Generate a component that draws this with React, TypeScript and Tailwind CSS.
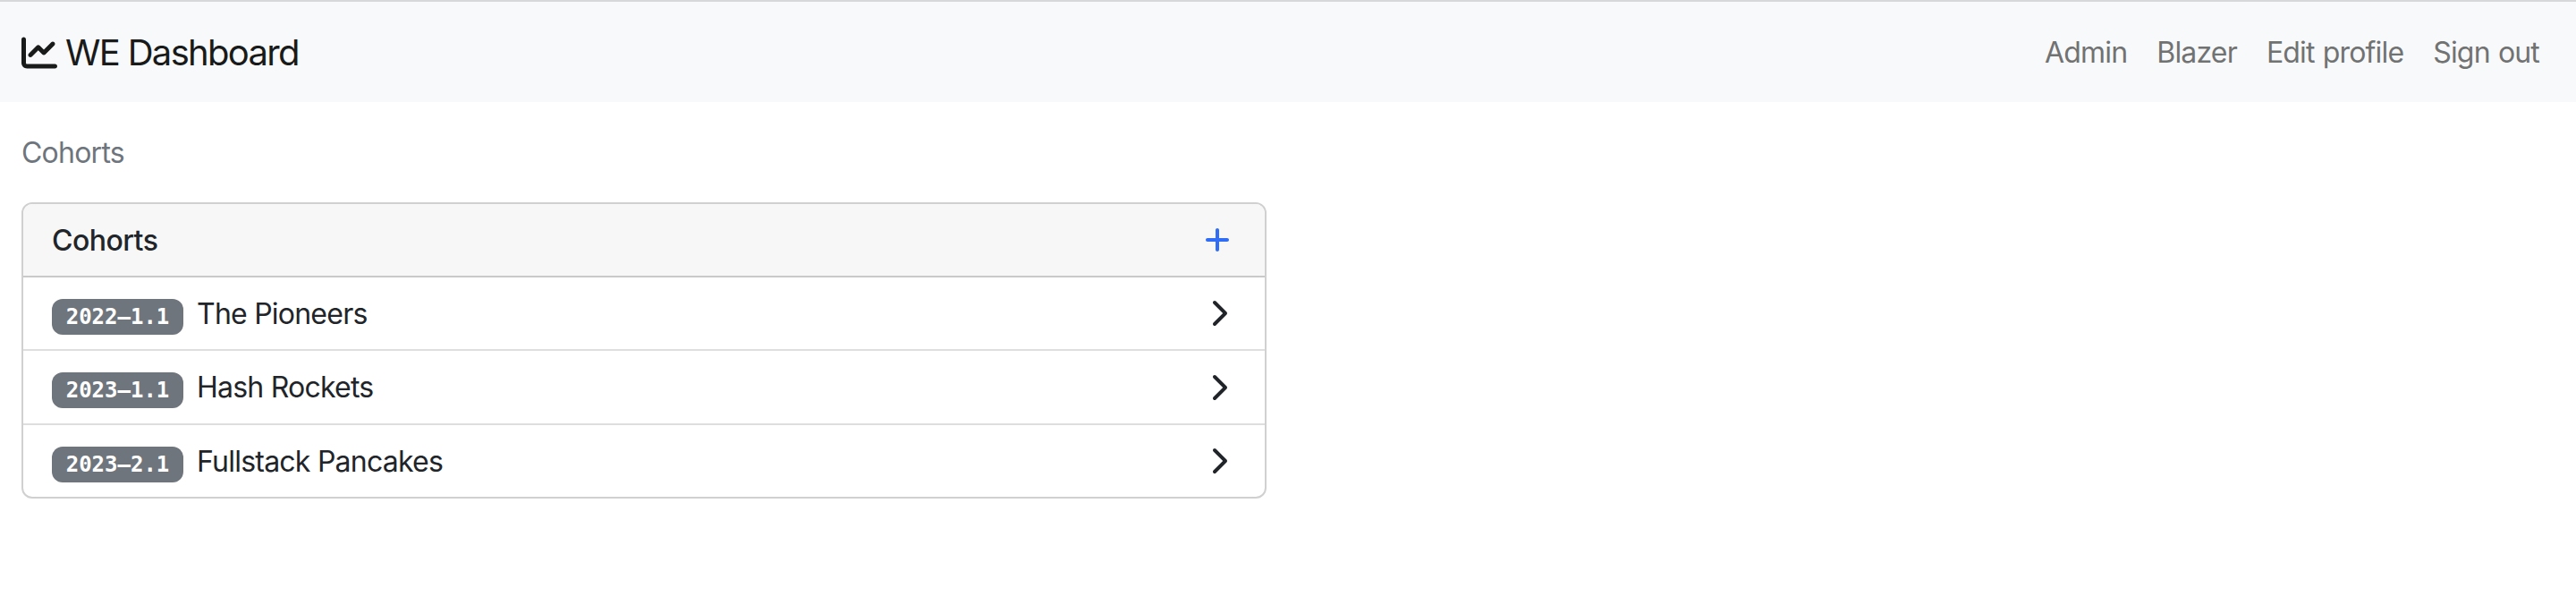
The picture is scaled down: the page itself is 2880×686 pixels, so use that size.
import { FaChartLine, FaChevronRight, FaPlus } from "react-icons/fa6";

const cohorts = [
  { code: "2022–1.1", name: "The Pioneers" },
  { code: "2023–1.1", name: "Hash Rockets" },
  { code: "2023–2.1", name: "Fullstack Pancakes" },
];
const links = ["Admin", "Blazer", "Edit profile", "Sign out"];

export default function App() {
  return (
    <div className="h-[686px] w-[2880px] bg-white font-[Inter,sans-serif] text-[32px] leading-[48px] tracking-[-0.024em] text-[#212529]">
      <nav className="flex h-[114px] items-center justify-between border-t-2 border-[#d7d8da] bg-[#f8f9fb] pr-10 pl-6 pt-px">
        <a className="flex items-center gap-[9px] text-[40px] text-[#191a1a]">
          <FaChartLine />
          <span className="whitespace-nowrap tracking-[-0.042em]">WE Dashboard</span>
        </a>
        <div className="flex gap-[33px] tracking-[-0.026em] text-[#717272] [word-spacing:1px]">
          {links.map((link) => (
            <a key={link} className="whitespace-nowrap last:pr-px">
              {link}
            </a>
          ))}
        </div>
      </nav>
      <main className="px-6 pt-[33px]">
        <div className="h-[48px] text-[#6e757c]">Cohorts</div>
        <section className="mt-[31px] w-[1392px] overflow-hidden rounded-[12px] border-2 border-[#d0d0d0]">
          <header className="flex h-[82px] items-center justify-between border-b-2 border-[#c9c9c9] bg-[#f7f7f7] pr-[37px] pl-8 font-medium tracking-[-0.017em]">
            <h2 className="pt-0.5">Cohorts</h2>
            <FaPlus className="text-[#2f6df6]" />
          </header>
          <ul className="divide-y-2 divide-[#dedede]">
            {cohorts.map((cohort) => (
              <li
                key={cohort.code}
                className="flex h-[83px] items-center justify-between pr-9 pl-8 first:h-[82px] last:h-[80px]"
              >
                <div className="flex items-center gap-[15px]">
                  <span className="mt-[7px] flex h-10 w-[147px] items-center justify-center rounded-[12px] bg-[#6e757c] font-['DejaVu_Sans_Mono',monospace] text-[24px] leading-none font-bold tracking-normal text-white">
                    {cohort.code}
                  </span>
                  <span className="pt-px whitespace-nowrap">{cohort.name}</span>
                </div>
                <FaChevronRight />
              </li>
            ))}
          </ul>
        </section>
      </main>
    </div>
  );
}
